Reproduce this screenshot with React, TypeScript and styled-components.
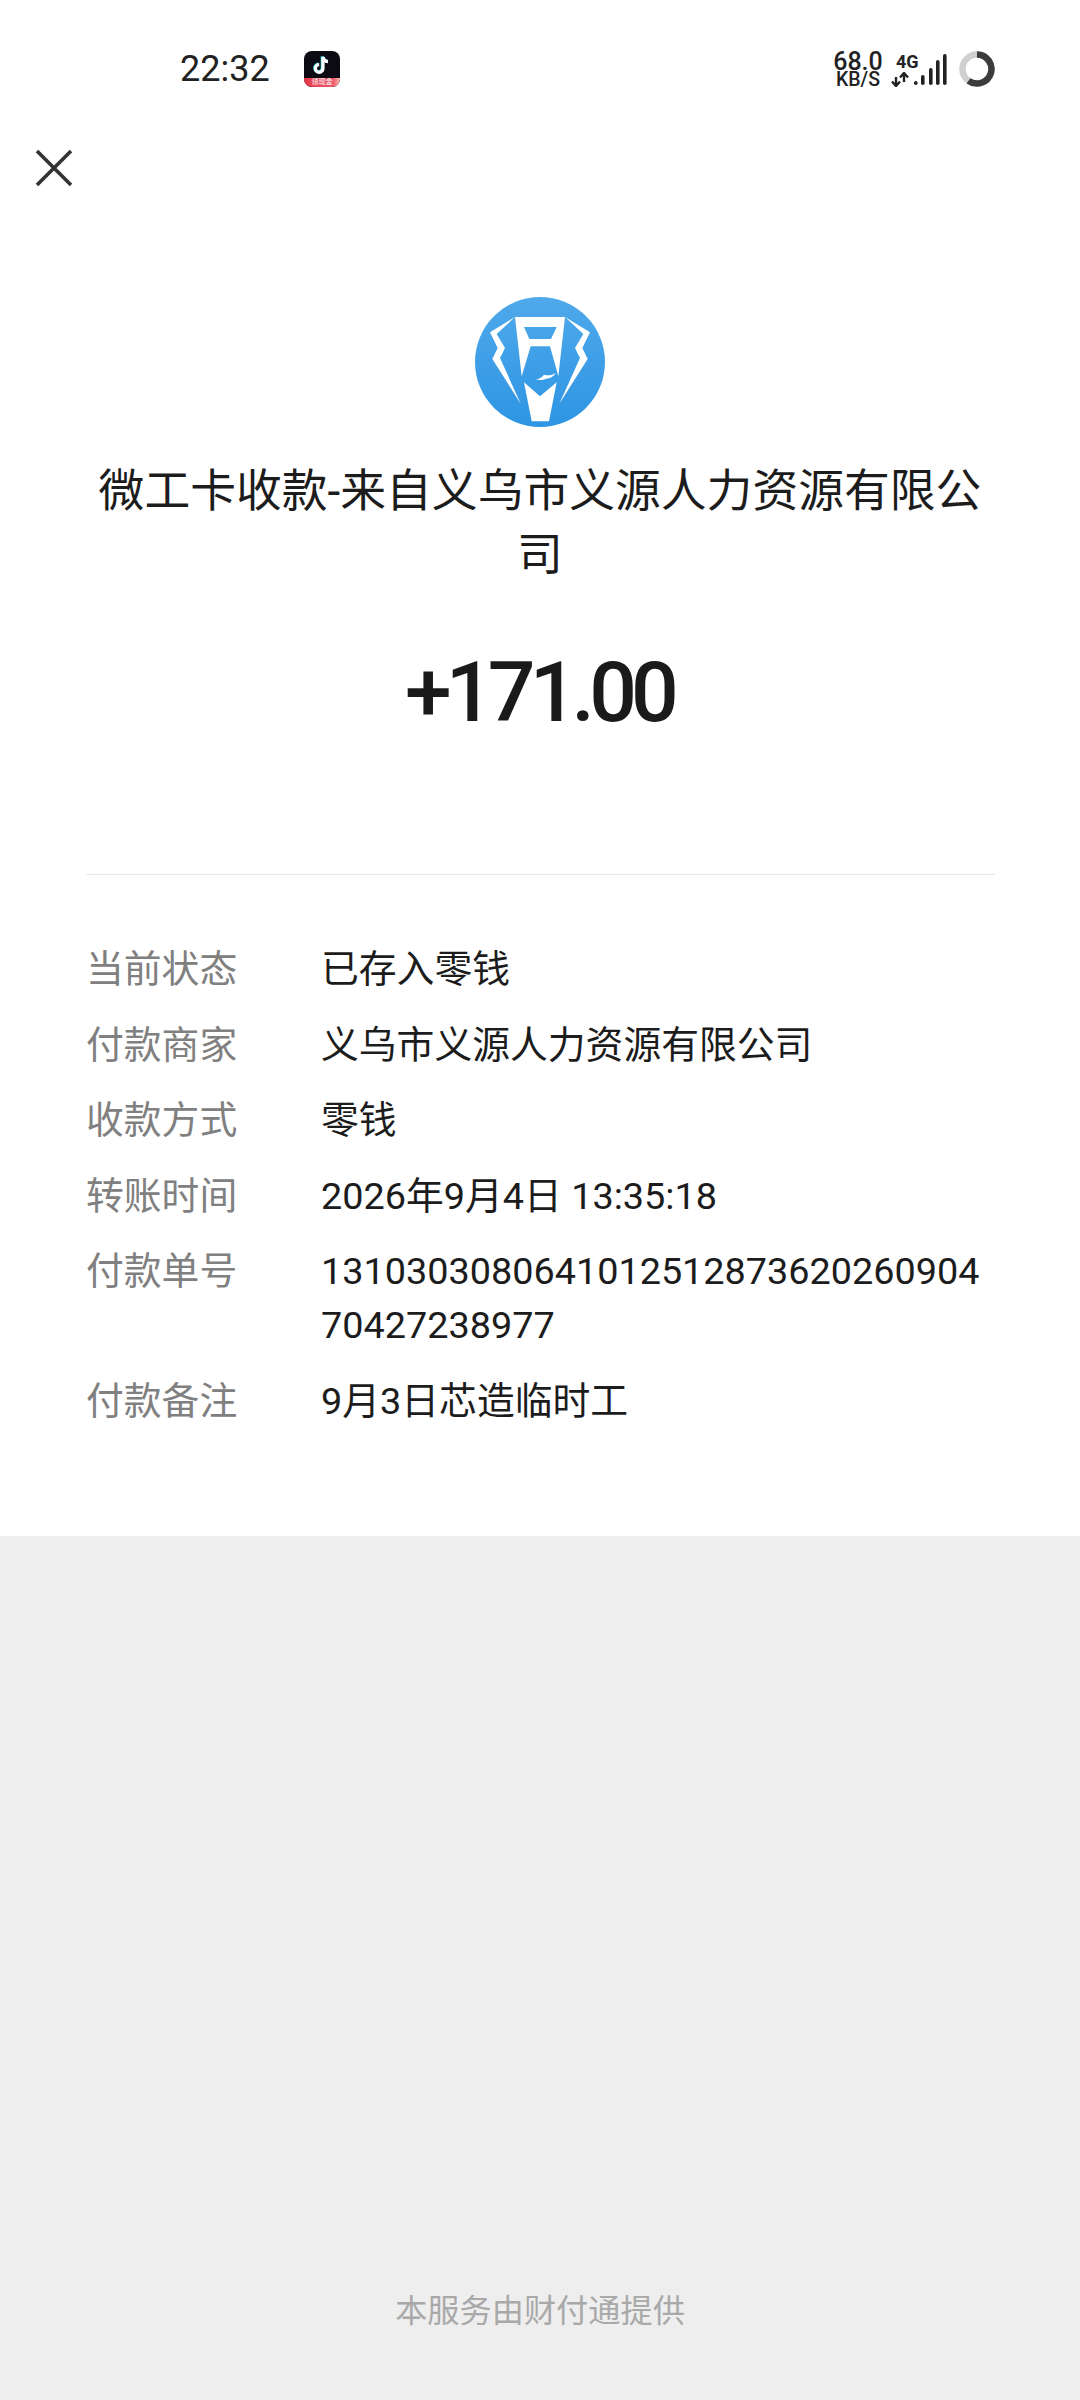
import styled, { createGlobalStyle } from "styled-components";

const GlobalStyle = createGlobalStyle`
  html, body {
    margin: 0;
    padding: 0;
    background: #eeeeee;
  }
  * {
    box-sizing: border-box;
  }
`;

const Page = styled.div`
  width: 1080px;
  height: 2400px;
  display: flex;
  flex-direction: column;
  font-family: Roboto, "Noto Sans CJK SC", sans-serif;
  color: #1a1a1a;
`;

const Sheet = styled.main`
  background: #fff;
  padding-bottom: 108px;
`;

const StatusBar = styled.div`
  height: 136px;
  display: flex;
  align-items: center;
  padding: 2px 85px 0 180px;
`;

const Clock = styled.span`
  font-size: 36px;
  color: #222;
  width: 124px;
`;

const Spacer = styled.div`
  flex: 1;
`;

const AppIcon = styled.div`
  position: relative;
  width: 36px;
  height: 36px;
  border-radius: 8px;
  overflow: hidden;
  background: #0c0b14;
  display: flex;
  justify-content: center;
  padding-top: 4px;
`;

const AppBadge = styled.span`
  position: absolute;
  left: 0;
  right: 0;
  bottom: 0;
  height: 9px;
  background: linear-gradient(to right, #e23a4d, #f0566a 80%, #f8b9a8);
  color: #fff;
  font-size: 7px;
  line-height: 9px;
  text-align: center;
`;

const Speed = styled.div`
  display: flex;
  flex-direction: column;
  align-items: center;
  width: 54px;
  margin-right: 6px;
  color: #222;
`;

const SpeedValue = styled.span`
  font-size: 25px;
  font-weight: 500;
  line-height: 21px;
`;

const SpeedUnit = styled.span`
  font-size: 19.5px;
  font-weight: 500;
  line-height: 15px;
`;

const Network = styled.div`
  display: flex;
  flex-direction: column;
  width: 22px;
  margin-right: 1px;
`;

const NetworkType = styled.span`
  font-size: 18px;
  font-weight: 700;
  line-height: 20px;
  color: #222;
  margin-left: 5px;
  white-space: nowrap;
`;

const Ring = styled.svg`
  margin-left: 12px;
`;

const CloseButton = styled.button`
  display: block;
  width: 40px;
  height: 40px;
  margin: 12px 0 0 34px;
  padding: 0;
  background: none;
  border: none;
`;

const Logo = styled.svg`
  display: block;
  margin: 109px auto 0;
`;

const Title = styled.h1`
  margin: 33px 86px 0;
  font-size: 45.8px;
  line-height: 64px;
  font-weight: 400;
  text-align: center;
  color: #1c1c1c;
`;

const Amount = styled.div`
  margin-top: 55px;
  padding-right: 2px;
  font-size: 84px;
  line-height: 100px;
  font-weight: 500;
  letter-spacing: -5.8px;
  text-align: center;
`;

const Divider = styled.hr`
  margin: 131px 85px 0 86px;
  border: none;
  height: 1px;
  background: #e6e6e6;
`;

const Details = styled.dl`
  margin: 67px 85px 0 86px;
  display: flex;
  flex-direction: column;
  gap: 21.6px;
`;

const Row = styled.div`
  display: grid;
  grid-template-columns: 235px 1fr;
  font-size: 37.8px;
  line-height: 54px;
`;

const Label = styled.dt`
  color: #808080;
`;

const Value = styled.dd`
  margin: 0;
  color: #1c1c1c;
  word-break: break-all;
`;

const Footer = styled.footer`
  flex: 1;
  background: #eeeeee;
  display: flex;
  align-items: flex-end;
  justify-content: center;
  padding-bottom: 67px;
  font-size: 32.2px;
  line-height: 44px;
  color: #a9a9a9;
`;

const rows = [
  { label: "当前状态", value: "已存入零钱" },
  { label: "付款商家", value: "义乌市义源人力资源有限公司" },
  { label: "收款方式", value: "零钱" },
  { label: "转账时间", value: "2026年9月4日 13:35:18" },
  { label: "付款单号", value: "131030308064101251287362026090470427238977" },
  { label: "付款备注", value: "9月3日芯造临时工" },
];

const bars = [
  { x: 0, top: 27 },
  { x: 7, top: 21 },
  { x: 15, top: 14 },
  { x: 22, top: 6 },
  { x: 29, top: 0 },
];

function SignalBars() {
  return (
    <svg width="33" height="31" viewBox="0 0 33 31" fill="#222">
      {bars.map((bar) => (
        <rect key={bar.x} x={bar.x} y={bar.top} width="3.6" height={31 - bar.top} rx="1.8" />
      ))}
    </svg>
  );
}

function TransferArrows() {
  return (
    <svg width="20" height="15" viewBox="0 0 20 15" fill="none" stroke="#222" strokeWidth="2.4">
      <path d="M5 5v9M1 9.5 5 14l4-4.5" />
      <path d="M13 10V1M9 5.5 13 1l4 4.5" />
    </svg>
  );
}

function TikTokNote() {
  return (
    <svg width="20" height="21" viewBox="0 0 20 21" fill="none" strokeWidth="3.2">
      <path d="M11 2v11.5a3.8 3.8 0 1 1-3.8-3.8" stroke="#3fe0df" transform="translate(-.7 -.5)" />
      <path d="M11 2c.4 2.8 2.3 4.4 5 4.6" stroke="#3fe0df" transform="translate(-.7 -.5)" />
      <path d="M11 2v11.5a3.8 3.8 0 1 1-3.8-3.8" stroke="#fff" />
      <path d="M11 2c.4 2.8 2.3 4.4 5 4.6" stroke="#fff" />
    </svg>
  );
}

export default function App() {
  return (
    <Page>
      <GlobalStyle />
      <Sheet>
        <StatusBar>
          <Clock>22:32</Clock>
          <AppIcon>
            <TikTokNote />
            <AppBadge>领现金</AppBadge>
          </AppIcon>
          <Spacer />
          <Speed>
            <SpeedValue>68.0</SpeedValue>
            <SpeedUnit>KB/S</SpeedUnit>
          </Speed>
          <Network>
            <NetworkType>4G</NetworkType>
            <TransferArrows />
          </Network>
          <SignalBars />
          <Ring width="36" height="36" viewBox="0 0 36 36" fill="none" strokeWidth="6.5">
            <circle cx="18" cy="18" r="14.5" stroke="#cfcfcf" />
            <path d="M18 3.5A14.5 14.5 0 1 1 9.5 29.8" stroke="#3c3c3c" />
          </Ring>
        </StatusBar>

        <CloseButton aria-label="关闭">
          <svg width="40" height="40" viewBox="0 0 40 40" stroke="#333" strokeWidth="3.6" fill="none">
            <path d="M3 3 37 37M37 3 3 37" />
          </svg>
        </CloseButton>

        <Logo width="130" height="130" viewBox="75 52 390 390">
          <defs>
            <linearGradient id="logoFill" x1="0" y1="0" x2="0" y2="1">
              <stop offset="0" stopColor="#4fa9ea" />
              <stop offset="1" stopColor="#2e95e4" />
            </linearGradient>
          </defs>
          <circle cx="270" cy="247" r="195" fill="url(#logoFill)" />
          <g fill="#fff">
            <polygon points="195,112 120,158 143,205 127,238 212,372 150,235 165,205 140,163" />
            <polygon points="345,112 420,158 397,205 413,238 328,372 390,235 375,205 400,163" />
            <path
              fillRule="evenodd"
              d="M195 112H345L325 290 300 200H242L215 290ZM222 142H320L303 178H238Z"
            />
            <polygon points="222,308 270,350 320,308 297,425 245,425" />
            <path d="M258 299c12-2 18-6 24-14 10 4 24 2 36-4-8 10-18 16-30 16-8 4-18 6-30 2Z" />
          </g>
        </Logo>

        <Title>微工卡收款-来自义乌市义源人力资源有限公司</Title>
        <Amount>+171.00</Amount>
        <Divider />

        <Details>
          {rows.map((row) => (
            <Row key={row.label}>
              <Label>{row.label}</Label>
              <Value>{row.value}</Value>
            </Row>
          ))}
        </Details>
      </Sheet>
      <Footer>本服务由财付通提供</Footer>
    </Page>
  );
}
